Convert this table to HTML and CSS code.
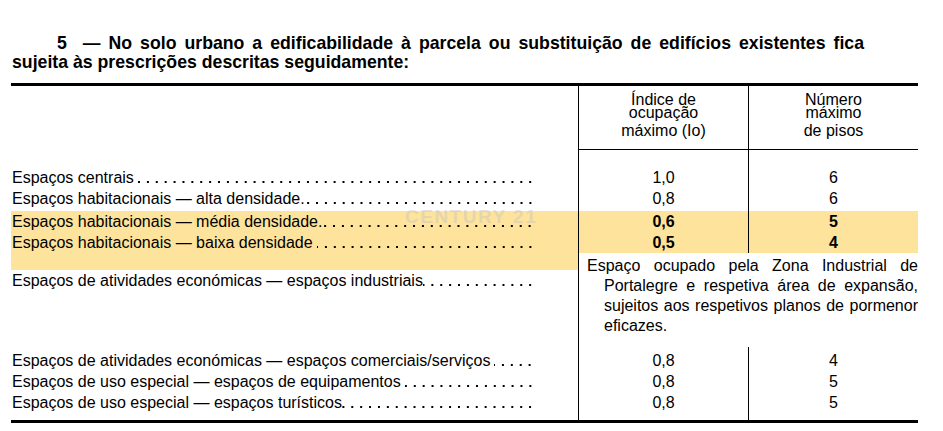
FILE: index.html
```html
<!DOCTYPE html>
<html lang="pt">
<head>
<meta charset="utf-8">
<title>Edificabilidade</title>
<link rel="stylesheet" href="styles.css">
</head>
<body>
<div class="page">
  <p class="intro">5&nbsp; — No solo urbano a edificabilidade à parcela ou substituição de edifícios existentes fica sujeita às prescrições descritas seguidamente:</p>
  <table class="grid">
    <colgroup><col class="c-label"><col class="c-val"><col class="c-val"></colgroup>
    <thead>
      <tr>
        <th class="blank"></th>
        <th class="hd v2"><span class="l1">Índice de</span><span class="l2">ocupação</span><span class="l3">máximo (Io)</span></th>
        <th class="hd v3"><span class="l1">Número</span><span class="l2">máximo</span><span class="l3">de pisos</span></th>
      </tr>
    </thead>
    <tbody>
      <tr class="r-first">
        <td class="label"><div class="lead"><span class="name">Espaços centrais</span><span class="dots"></span></div></td>
        <td class="num v2">1,0</td><td class="num v3">6</td>
      </tr>
      <tr class="r-second">
        <td class="label"><div class="lead"><span class="name">Espaços habitacionais — alta densidade.</span><span class="dots tight"></span></div></td>
        <td class="num v2">0,8</td><td class="num v3">6</td>
      </tr>
      <tr class="hl">
        <td class="label"><div class="lead"><span class="name">Espaços habitacionais — média densidade.</span><span class="dots tight"></span></div></td>
        <td class="num v2 strong">0,6</td><td class="num v3 strong">5</td>
      </tr>
      <tr class="hl">
        <td class="label"><div class="lead"><span class="name">Espaços habitacionais — baixa densidade</span><span class="dots"></span></div></td>
        <td class="num v2 strong">0,5</td><td class="num v3 strong">4</td>
      </tr>
      <tr class="r-ind">
        <td class="label hl-top"><div class="lead"><span class="name">Espaços de atividades económicas — espaços industriais</span><span class="dots tight"></span></div></td>
        <td class="note v2" colspan="2">Espaço ocupado pela Zona Industrial de Portalegre e respetiva área de expansão, sujeitos aos respetivos planos de pormenor eficazes.</td>
      </tr>
      <tr class="r-after">
        <td class="label"><div class="lead"><span class="name">Espaços de atividades económicas — espaços comerciais/serviços</span><span class="dots"></span></div></td>
        <td class="num v2">0,8</td><td class="num v3">4</td>
      </tr>
      <tr>
        <td class="label"><div class="lead"><span class="name">Espaços de uso especial — espaços de equipamentos</span><span class="dots"></span></div></td>
        <td class="num v2">0,8</td><td class="num v3">5</td>
      </tr>
      <tr class="r-last">
        <td class="label"><div class="lead"><span class="name">Espaços de uso especial — espaços turísticos</span><span class="dots tight"></span></div></td>
        <td class="num v2">0,8</td><td class="num v3">5</td>
      </tr>
    </tbody>
  </table>
  <div class="watermark">CENTURY 21</div>
</div>
</body>
</html>
```

FILE: styles.css
```css
html, body {
  margin: 0;
  padding: 0;
  background: #ffffff;
}

body {
  font-family: "Liberation Sans", Arial, sans-serif;
  font-size: 16px;
  color: #000;
}

th, td {
  padding: 0;
  vertical-align: top;
  font-weight: normal;
}

.page {
  position: relative;
  width: 943px;
  height: 431px;
  overflow: hidden;
}

.intro {
  margin: 34px 0 0 12px;
  width: 852px;
  font-weight: bold;
  font-size: 17.7px;
  line-height: 19px;
  text-align: justify;
  text-indent: 45px;
}

.grid {
  margin: 11px 0 0 11px;
  width: 907px;
  table-layout: fixed;
  border-collapse: separate;
  border-spacing: 0;
  border-top: 3px solid #000;
  border-bottom: 3px solid #000;
}

.c-label { width: 567px; }
.c-val { width: 170px; }

.v2, .v3 {
  border-left: 1px solid #000;
}

.hd {
  border-bottom: 1px solid #000;
  text-align: center;
  padding: 7px 0 8px;
}

.hd span {
  display: block;
}

.hd .l1, .hd .l2 {
  line-height: 13px;
}

.hd .l3 {
  line-height: 21px;
  margin-top: 1px;
}

.label {
  padding: 0 45px 0 1px;
  line-height: 21px;
}

.lead {
  display: flex;
}

.name {
  flex: none;
  white-space: nowrap;
}

.dots {
  flex: 1;
  min-width: 0;
  height: 21px;
  margin-left: 4px;
  background-image: linear-gradient(90deg, transparent 0 5.4px, #000 5.4px 7.2px, transparent 7.2px);
  background-size: 8.9px 1.8px;
  background-position: right 0 top 14.2px;
  background-repeat: repeat-x;
}

.dots.tight {
  margin-left: 0;
}

.num {
  text-align: center;
  line-height: 21px;
}

.strong {
  font-weight: bold;
}

.r-first td { padding-top: 17px; }
.r-second td { padding-bottom: 2px; }

.hl td {
  background: #fde39b;
}

.r-ind .label {
  padding-top: 17px;
}

.hl-top {
  background: linear-gradient(to bottom, #fde39b 17px, transparent 17px);
}

.note {
  padding: 3px 0 11px 25px;
  text-indent: -17px;
  line-height: 20px;
  text-align: justify;
}

.r-after td { padding-top: 3px; }
.r-last td { padding-bottom: 7px; }

.watermark {
  position: absolute;
  left: 405px;
  top: 206px;
  font-family: "Liberation Sans", Arial, sans-serif;
  font-weight: bold;
  font-size: 19px;
  letter-spacing: 1.5px;
  color: rgba(205, 200, 190, 0.5);
  line-height: 22px;
  pointer-events: none;
}
```
